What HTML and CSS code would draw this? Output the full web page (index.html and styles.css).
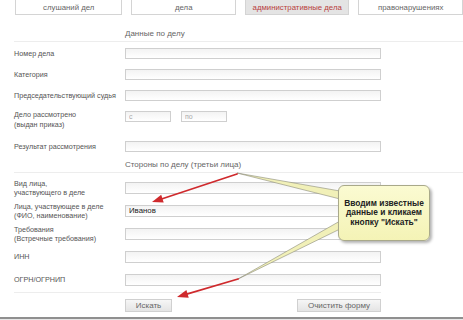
FILE: index.html
```html
<!DOCTYPE html>
<html lang="ru">
<head>
  <meta charset="UTF-8" />
  <title>Поиск дел</title>
  <link rel="stylesheet" href="styles.css">
</head>
<body>
  <div class="page">
    <nav class="tabs">
      <a class="tab">слушаний дел</a>
      <a class="tab">дела</a>
      <a class="tab active">административные дела</a>
      <a class="tab">правонарушениях</a>
    </nav>

    <form class="search">
      <h2 class="section-title">Данные по делу</h2>
      <div class="row"><label>Номер дела</label><input class="field" type="text"></div>
      <div class="row"><label>Категория</label><input class="field" type="text"></div>
      <div class="row"><label>Председательствующий судья</label><input class="field" type="text"></div>
      <div class="row row-tall">
        <label>Дело рассмотрено<br>(выдан приказ)</label>
        <div class="range">
          <input class="field small" type="text" placeholder="с">
          <input class="field small" type="text" placeholder="по">
        </div>
      </div>
      <div class="row"><label>Результат рассмотрения</label><input class="field" type="text"></div>

      <h2 class="section-title second">Стороны по делу (третьи лица)</h2>
      <div class="parties">
        <div class="row"><label>Вид лица,<br>участвующего в деле</label><input class="field" type="text"></div>
        <div class="row"><label>Лица, участвующее в деле<br>(ФИО, наименование)</label><input class="field filled" type="text" value="Иванов"></div>
        <div class="row"><label>Требования<br>(Встречные требования)</label><input class="field" type="text"></div>
        <div class="row"><label>ИНН</label><input class="field" type="text"></div>
        <div class="row"><label>ОГРН/ОГРНИП</label><input class="field" type="text"></div>
      </div>

      <div class="actions">
        <button type="button" class="btn">Искать</button>
        <button type="button" class="btn">Очистить форму</button>
      </div>
    </form>

    <div class="footer-bar"></div>

    <div class="callout">Вводим известные<br>данные и кликаем<br>кнопку "Искать"</div>

    <svg class="annotations" width="463" height="320" viewBox="0 0 463 320">
      <!-- callout pointers -->
      <polygon class="pointer" points="237,173 340,191 340,199" />
      <polygon class="pointer" points="238,279 340,221 340,229" />
      <!-- red arrows -->
      <line class="arrow" x1="237" y1="174" x2="160" y2="199.5" />
      <polygon class="arrow-head" points="152,202 163.7,202.4 161.2,194.8" />
      <line class="arrow" x1="238" y1="279" x2="185" y2="294.6" />
      <polygon class="arrow-head" points="177,297 188.7,297.7 186.4,290" />
    </svg>
  </div>
</body>
</html>
```

FILE: styles.css
```css
body {
  margin: 0;
  background: #fff;
  font-family: "Liberation Sans", Arial, sans-serif;
  color: #555;
}
.page {
  position: relative;
  width: 463px;
  height: 320px;
  overflow: hidden;
}
.tabs {
  display: flex;
  gap: 9px;
  padding-left: 15px;
  margin-top: -3px;
}
.tab {
  width: 105px;
  height: 18px;
  box-sizing: border-box;
  border: 1px solid #d4d4d4;
  border-top: none;
  background: #fff;
  display: flex;
  align-items: center;
  justify-content: center;
  padding-top: 4px;
  font-size: 7.8px;
  color: #666;
}
.tab:first-child {
  width: 108px;
}
.tab.active {
  background: #e4e4e4;
  color: #b8403c;
}
.search {
  margin: 0;
  padding-left: 14px;
}
.section-title {
  margin: 0;
  padding: 12px 0 0 111px;
  line-height: 14px;
  font-size: 8px;
  font-weight: normal;
  color: #666;
  border-bottom: 1px solid #ededed;
}
.section-title.second {
  padding-top: 1px;
  line-height: 14px;
}
.section-title + .row {
  margin-top: 1px;
}
.row {
  display: flex;
  align-items: center;
  height: 21px;
}
.row label {
  width: 111px;
  flex-shrink: 0;
  font-size: 7.2px;
  line-height: 9px;
  color: #555;
}
.row-tall {
  height: 30px;
  align-items: flex-start;
  padding-top: 5px;
  box-sizing: border-box;
}
.row-tall label {
  line-height: 10px;
  margin-top: -1px;
}
.parties {
  margin-top: 3px;
}
.parties .row {
  height: 23px;
}
.field {
  width: 256px;
  height: 11px;
  box-sizing: border-box;
  margin: 0;
  padding: 0 3px;
  border: 1px solid #cfcfcf;
  background: linear-gradient(#f3f3f3, #fff);
  font-family: "Liberation Sans", Arial, sans-serif;
  font-size: 7px;
  color: #333;
}
.parties .field {
  height: 12px;
}
.field::placeholder {
  color: #aaa;
}
.field.filled {
  font-size: 7.8px;
  color: #222;
}
.range {
  display: flex;
  gap: 10px;
}
.field.small {
  width: 46px;
}
.actions {
  display: flex;
  justify-content: space-between;
  width: 256px;
  margin-top: 1px;
  padding: 6px 0 0 111px;
  border-top: 1px solid #ededed;
}
.btn {
  height: 13px;
  padding: 0;
  border: 1px solid #d0d0d0;
  background: linear-gradient(#f6f6f6, #e4e4e4);
  font-family: "Liberation Sans", Arial, sans-serif;
  font-size: 8px;
  color: #666;
  width: 47px;
}
.btn + .btn {
  width: 84px;
}
.footer-bar {
  margin-top: 5px;
  height: 3px;
  border-top: 2px solid #8f8f8f;
  background: #e6e6e6;
}
.callout {
  position: absolute;
  left: 338px;
  top: 185px;
  width: 92px;
  height: 56px;
  box-sizing: border-box;
  display: flex;
  align-items: center;
  justify-content: center;
  text-align: center;
  background: linear-gradient(#fbfbd2, #f4f3b6);
  border: 1px solid #a9a98a;
  border-radius: 6px;
  box-shadow: 2px 2px 3px rgba(0, 0, 0, 0.3);
  font-size: 8.4px;
  line-height: 9.5px;
  font-weight: bold;
  color: #222;
  z-index: 2;
}
.annotations {
  position: absolute;
  left: 0;
  top: 0;
  pointer-events: none;
  z-index: 1;
}
.pointer {
  fill: #f1f0b8;
  stroke: #8a8a78;
  stroke-width: 0.6;
}
.arrow {
  stroke: #cf2a2d;
  stroke-width: 1.8;
  stroke-linecap: round;
}
.arrow-head {
  fill: #cf2a2d;
}
```
